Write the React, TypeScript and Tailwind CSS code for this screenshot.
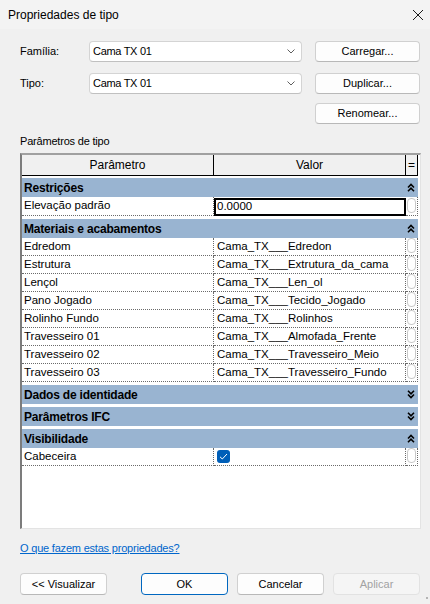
import React from "react";

const Up = () => (
  <svg width="8" height="9" viewBox="0 0 8 9" className="block">
    <path d="M1 4.5L4 1.5L7 4.5M1 8.2L4 5.2L7 8.2" stroke="#000" strokeWidth="1.6" fill="none" />
  </svg>
);
const Down = () => (
  <svg width="8" height="9" viewBox="0 0 8 9" className="block">
    <path d="M1 0.8L4 3.8L7 0.8M1 4.5L4 7.5L7 4.5" stroke="#000" strokeWidth="1.6" fill="none" />
  </svg>
);

const Pill = () => (
  <div className="ml-[1px] mt-[1px] w-[9px] h-[15px] rounded-[4px] border border-[#c8c8c8] bg-white" />
);

function Group({ title, open }: { title: string; open: boolean }) {
  return (
    <div className="mt-[3px] w-[396px] h-[19px] bg-[#99b4d1] flex items-center justify-between pl-[2px]">
      <span className="font-bold text-[12px] tracking-[-0.2px] leading-none">{title}</span>
      <span className="w-[12px] flex justify-start pl-[1px]">{open ? <Up /> : <Down />}</span>
    </div>
  );
}

function Row({ label, value }: { label: string; value?: React.ReactNode }) {
  return (
    <div className="grid grid-cols-[192px_192px_12px] h-[18px] w-[396px]">
      <div className="border-r border-b border-dotted border-[#6a6a6a] pl-[2px] flex items-center text-[11.5px] leading-none whitespace-nowrap">
        {label}
      </div>
      <div className="border-r border-b border-dotted border-[#6a6a6a] pl-[3px] flex items-center text-[11.5px] leading-none whitespace-nowrap">
        {value}
      </div>
      <div className="border-r border-b border-dotted border-[#6a6a6a]">
        <div className="ml-[1px] w-[9px] h-[15px] rounded-[4px] border border-[#c8c8c8] bg-white" />
      </div>
    </div>
  );
}

function Btn({
  children,
  className = "",
  variant = "normal",
}: {
  children: React.ReactNode;
  className?: string;
  variant?: "normal" | "primary" | "disabled";
}) {
  const v =
    variant === "primary"
      ? "border-[#0067c0] bg-[#fdfdfd] text-black"
      : variant === "disabled"
      ? "border-[#e2e2e2] bg-[#f5f5f5] text-[#a2a2a2]"
      : "border-[#d0d0d0] border-b-[#b8b8b8] bg-[#fdfdfd] text-black";
  return (
    <div
      className={`flex items-center justify-center rounded-[4px] border text-[11px] leading-none ${v} ${className}`}
    >
      {children}
    </div>
  );
}

function Combo({ text }: { text: string }) {
  return (
    <div className="w-[213px] h-[21px] bg-white border border-[#d4d4d4] border-b-[#c0c0c0] rounded-[4px] flex items-center justify-between pl-[3px] pr-[6px]">
      <span className="text-[11px] tracking-[-0.3px] leading-none">{text}</span>
      <svg width="8" height="5" viewBox="0 0 8 5">
        <path d="M0.5 0.5L4 4L7.5 0.5" stroke="#5f5f5f" strokeWidth="1" fill="none" />
      </svg>
    </div>
  );
}

export default function App() {
  return (
    <div className="relative w-[430px] h-[604px] bg-[#f0f0f0] text-black overflow-hidden font-['Liberation_Sans',Arial,sans-serif]">
      <div className="h-[29px] bg-[#f3f3f3] flex items-center justify-between pl-[8px] pr-[6px]">
        <span className="text-[12px] leading-none">Propriedades de tipo</span>
        <svg width="12" height="12" viewBox="0 0 12 12">
          <path d="M1 1L11 11M11 1L1 11" stroke="#1c1c1c" strokeWidth="1" fill="none" />
        </svg>
      </div>

      <div className="pl-[20px] pr-[10px] pt-[12px] flex flex-col">
        <div className="flex items-center h-[21px]">
          <span className="w-[69px] text-[11px] leading-none">Família:</span>
          <Combo text="Cama TX 01" />
          <Btn className="ml-[13px] w-[105px] h-[21px]">Carregar...</Btn>
        </div>
        <div className="flex items-center h-[21px] mt-[11px]">
          <span className="w-[69px] text-[11px] leading-none">Tipo:</span>
          <Combo text="Cama TX 01" />
          <Btn className="ml-[13px] w-[105px] h-[21px]">Duplicar...</Btn>
        </div>
        <div className="flex justify-end mt-[9px]">
          <Btn className="w-[105px] h-[21px]">Renomear...</Btn>
        </div>

        <div className="mt-[10px] text-[11px] tracking-[-0.2px] leading-[15px]">Parâmetros de tipo</div>

        <div className="mt-[4px] w-[401px] h-[376px] bg-white border-l-2 border-t-2 border-r border-b border-l-[#7c7c7c] border-t-[#a0a0a0] border-r-[#e3e3e3] border-b-[#e3e3e3] flex flex-col">
          <div className="grid grid-cols-[192px_192px_12px] h-[21px] w-[396px] bg-[#f0f0f0] border-b border-black">
            <div className="border-r border-black flex items-center justify-center text-[12px] leading-none">Parâmetro</div>
            <div className="border-r border-black flex items-center justify-center text-[12px] leading-none">Valor</div>
            <div className="border-r border-black flex items-center justify-center text-[12px] leading-none pb-[1px]">=</div>
          </div>

          <div className="mt-[2px] w-[396px] h-[19px] bg-[#99b4d1] flex items-center justify-between pl-[2px]">
            <span className="font-bold text-[12px] tracking-[-0.2px] leading-none">Restrições</span>
            <span className="w-[12px] flex justify-start pl-[1px]">
              <Up />
            </span>
          </div>
          <div className="grid grid-cols-[192px_192px_12px] h-[19px] w-[396px]">
            <div className="border-r border-b border-dotted border-[#6a6a6a] pl-[2px] flex items-center text-[11.5px] leading-none">
              Elevação padrão
            </div>
            <div className="pt-[1px]">
              <div className="h-[18px] border-2 border-black flex items-center pl-[1px] text-[11.5px] leading-none">0.0000</div>
            </div>
            <div className="border-r border-b border-dotted border-[#6a6a6a]">
              <Pill />
            </div>
          </div>

          <Group title="Materiais e acabamentos" open />
          <Row label="Edredom" value="Cama_TX___Edredon" />
          <Row label="Estrutura" value="Cama_TX___Extrutura_da_cama" />
          <Row label="Lençol" value="Cama_TX___Len_ol" />
          <Row label="Pano Jogado" value="Cama_TX___Tecido_Jogado" />
          <Row label="Rolinho Fundo" value="Cama_TX___Rolinhos" />
          <Row label="Travesseiro 01" value="Cama_TX___Almofada_Frente" />
          <Row label="Travesseiro 02" value="Cama_TX___Travesseiro_Meio" />
          <Row label="Travesseiro 03" value="Cama_TX___Travesseiro_Fundo" />

          <Group title="Dados de identidade" open={false} />
          <Group title="Parâmetros IFC" open={false} />
          <Group title="Visibilidade" open />
          <Row
            label="Cabeceira"
            value={
              <div className="w-[13px] h-[13px] rounded-[3px] bg-[#005fb8] flex items-center justify-center">
                <svg width="9" height="7" viewBox="0 0 9 7">
                  <path d="M1 3.8L3.3 6L8 1" stroke="#fff" strokeWidth="1" fill="none" />
                </svg>
              </div>
            }
          />
        </div>

        <a className="mt-[12px] self-start text-[11px] leading-[15px] text-[#0066cc] underline tracking-[-0.2px]">
          O que fazem estas propriedades?
        </a>

        <div className="mt-[17px] flex items-center">
          <Btn className="w-[87px] h-[22px]">&lt;&lt; Visualizar</Btn>
          <Btn className="ml-[34px] w-[87px] h-[22px]" variant="primary">
            OK
          </Btn>
          <Btn className="ml-[9px] w-[87px] h-[22px]">Cancelar</Btn>
          <Btn className="ml-[9px] w-[87px] h-[22px]" variant="disabled">
            Aplicar
          </Btn>
        </div>
      </div>
      <div className="absolute right-[2px] bottom-[5px] w-[2px] h-[2px] bg-[#b4b4b4]" />
    </div>
  );
}
